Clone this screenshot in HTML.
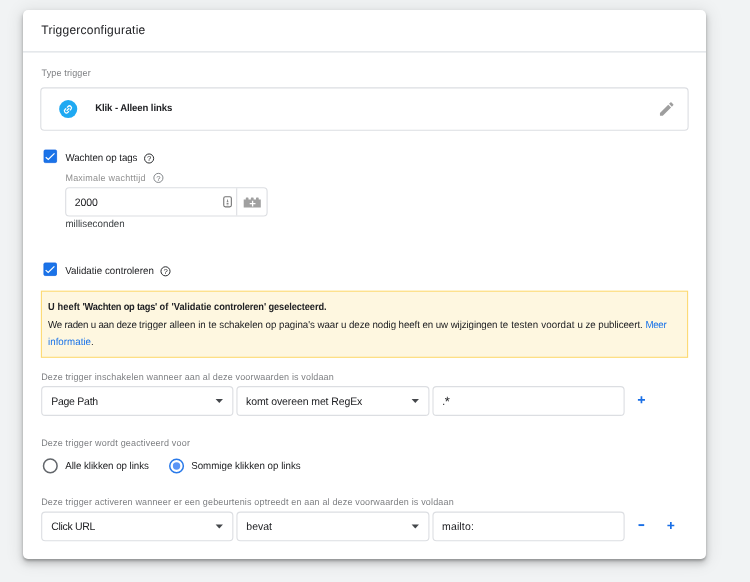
<!DOCTYPE html>
<html lang="nl">
<head>
<meta charset="utf-8">
<title>Triggerconfiguratie</title>
<style>
  html, body { margin: 0; padding: 0; }
  body {
    width: 750px; height: 582px; overflow: hidden; position: relative;
    background: #f1f3f4;
    font-family: "Liberation Sans", sans-serif;
    color: #202124;
  }
  .card {
    position: absolute; left: 23px; top: 10px; width: 683px; height: 549px;
    background: #fff; border-radius: 5px;
    box-shadow: 0 2px 2.5px rgba(0,0,0,.24), 0 4px 6px 1px rgba(0,0,0,.15), 0 2px 16px 4px rgba(0,0,0,.07);
  }
  #shapes { position: absolute; left: 0; top: 0; will-change: transform; }
  #text { position: absolute; left: 0; top: 0; width: 750px; height: 582px; will-change: transform; }
  .t { position: absolute; white-space: nowrap; line-height: 14px; margin: 0; text-rendering: geometricPrecision; transform: scaleY(1.033); transform-origin: 0 10.5px; }
  .title { left: 41.3px; top: 23px; font-size: 12px; letter-spacing: .24px; color: #202124; }
  .lbl { font-size: 9px; color: #7d7f82; letter-spacing: .15px; }
  .txt { font-size: 9.75px; color: #202124; }
  .fld { font-size: 10.5px; color: #202124; }
  .t.b { font-size: 9.25px; font-weight: 700; transform: scaleY(1.09); transform-origin: 0 9px; }
  a { color: #1a73e8; text-decoration: none; }
</style>
</head>
<body>
<div class="card"></div>

<svg id="shapes" width="750" height="582" viewBox="0 0 750 582">
  <!-- header divider -->
  <rect x="23" y="51.1" width="683" height="1.5" fill="#e3e6e9"/>

  <!-- trigger type box -->
  <rect x="40.8" y="87.9" width="647.3" height="42.3" rx="3.5" fill="#fff" stroke="#dcdee2" stroke-width="1.1"/>
  <circle cx="68.2" cy="109.05" r="9.05" fill="#1fa9f2"/>
  <g transform="translate(67.95 109.4) rotate(-45) scale(.84)" fill="none" stroke="#fff" stroke-width="1.45" stroke-linecap="butt">
    <path d="M-0.7 -2.35 H-2.6 A2.35 2.35 0 0 0 -2.6 2.35 H-0.7"/>
    <path d="M0.7 -2.35 H2.6 A2.35 2.35 0 0 1 2.6 2.35 H0.7"/>
    <path d="M-2.2 0 H2.2"/>
  </g>
  <!-- pencil -->
  <g transform="translate(657.7 100) scale(.75)">
    <path fill="#9e9e9e" d="M3 17.25V21h3.75L17.81 9.94l-3.75-3.75L3 17.25zM20.71 7.04c.39-.39.39-1.02 0-1.41l-2.34-2.34c-.39-.39-1.02-.39-1.41 0l-1.83 1.83 3.75 3.75 1.83-1.83z"/>
  </g>

  <!-- checkbox 1 -->
  <rect x="44" y="150" width="12.6" height="12.6" rx="1.3" fill="#1a73e8" stroke="#1466df" stroke-width=".8"/>
  <path d="M45.75 157.2 L48.3 159.5 L54.5 153.4" fill="none" stroke="#fff" stroke-width="1.25"/>
  <!-- help 1 -->
  <circle cx="149.1" cy="158.5" r="4.55" fill="none" stroke="#26282b" stroke-width="1"/>
  <!-- help 2 -->
  <circle cx="158.4" cy="177.9" r="4.55" fill="none" stroke="#75797e" stroke-width=".9"/>

  <!-- number input -->
  <rect x="65.7" y="187.7" width="201.4" height="28.3" rx="3.5" fill="#fff" stroke="#dcdee2" stroke-width="1.1"/>
  <rect x="236.15" y="188.2" width="1.1" height="27.3" fill="#dcdee2"/>
  <!-- small stepper-like icon -->
  <rect x="223.75" y="196.75" width="7.6" height="10.1" rx="1.6" fill="none" stroke="#747474" stroke-width="1.1"/>
  <path d="M227.55 198.7 L226.6 202.3 H228.5 Z M226.6 203.1 H228.5 V203.9 H226.6 Z M226.6 204.5 H228.5 V205.2 H226.6 Z" fill="#868686"/>
  <!-- lego brick with plus -->
  <g transform="translate(243.7 197.55)">
    <path fill="#a0a0a0" d="M0 1.9 H2.1 V.6 Q2.1 0 2.7 0 H4.2 Q4.8 0 4.8 .6 V1.9 H7.15 V.6 Q7.15 0 7.75 0 H9.35 Q9.95 0 9.95 .6 V1.9 H12.3 V.6 Q12.3 0 12.9 0 H14.4 Q15 0 15 .6 V1.9 H17.1 V9.85 H0 Z"/>
    <path fill="#fff" d="M8.25 3.2 H9.55 V5.45 H11.8 V6.75 H9.55 V9 H8.25 V6.75 H6 V5.45 H8.25 Z"/>
  </g>

  <!-- checkbox 2 -->
  <rect x="43.9" y="262.95" width="12.6" height="12.6" rx="1.3" fill="#1a73e8" stroke="#1466df" stroke-width=".8"/>
  <path d="M45.65 270.15 L48.2 272.45 L54.4 266.35" fill="none" stroke="#fff" stroke-width="1.25"/>
  <!-- help 3 -->
  <circle cx="165.5" cy="271.3" r="4.55" fill="none" stroke="#26282b" stroke-width="1"/>

  <!-- warning -->
  <rect x="41.4" y="291.2" width="646.2" height="66.1" fill="#fef7e0" stroke="#fdda72" stroke-width="1.1"/>

  <!-- row 1 -->
  <rect x="41.7" y="386.6" width="191.15" height="28.8" rx="3.5" fill="#fff" stroke="#dcdee2" stroke-width="1.1"/>
  <rect x="236.95" y="386.6" width="191.95" height="28.8" rx="3.5" fill="#fff" stroke="#dcdee2" stroke-width="1.1"/>
  <rect x="433" y="386.6" width="191.1" height="28.8" rx="3.5" fill="#fff" stroke="#dcdee2" stroke-width="1.1"/>
  <path d="M215.6 399 H222.95 L219.3 403 Z" fill="#44474b"/>
  <path d="M411.6 399 H418.95 L415.3 403 Z" fill="#44474b"/>
  <path d="M637.9 399.8 H645 M641.45 396.3 V403.3" stroke="#1a6fe6" stroke-width="1.7" fill="none"/>

  <!-- radios -->
  <circle cx="50.3" cy="465.9" r="6.8" fill="#fff" stroke="#62666b" stroke-width="1.5"/>
  <circle cx="176.55" cy="466" r="6.8" fill="#fff" stroke="#2a7ae9" stroke-width="1.5"/>
  <circle cx="176.55" cy="466" r="3.7" fill="#5b95f5"/>

  <!-- row 2 -->
  <rect x="41.7" y="512.1" width="191.15" height="28.7" rx="3.5" fill="#fff" stroke="#dcdee2" stroke-width="1.1"/>
  <rect x="236.95" y="512.1" width="191.95" height="28.7" rx="3.5" fill="#fff" stroke="#dcdee2" stroke-width="1.1"/>
  <rect x="433" y="512.1" width="191.1" height="28.7" rx="3.5" fill="#fff" stroke="#dcdee2" stroke-width="1.1"/>
  <path d="M215.6 524.5 H222.95 L219.3 528.5 Z" fill="#44474b"/>
  <path d="M411.6 524.5 H418.95 L415.3 528.5 Z" fill="#44474b"/>
  <path d="M638.5 525.1 H644.2" stroke="#1a6fe6" stroke-width="1.9" fill="none"/>
  <path d="M667.4 525.5 H674.3 M670.85 522 V529" stroke="#1a6fe6" stroke-width="1.7" fill="none"/>

  <!-- question marks in help icons -->
  <g font-family="Liberation Sans, sans-serif" text-anchor="middle">
    <text x="149.15" y="161.3" font-size="7.8" fill="#17181a">?</text>
    <text x="158.45" y="180.7" font-size="7.8" fill="#6c6f73">?</text>
    <text x="165.55" y="274.1" font-size="7.8" fill="#17181a">?</text>
  </g>
</svg>

<div id="text">
<div class="t title">Triggerconfiguratie</div>
<div class="t lbl" style="left:41.5px; top:66px;">Type trigger</div>
<div class="t" style="left:95.2px; top:102px; font-size:9.6px; font-weight:700; letter-spacing:-.11px; color:#202124;">Klik - Alleen links</div>

<div class="t txt" style="left:65.4px; top:152px; letter-spacing:-.05px;">Wachten op tags</div>
<div class="t lbl" style="left:65.4px; top:171px; color:#8f8f8f; letter-spacing:.24px;">Maximale wachttijd</div>
<div class="t fld" style="left:74.8px; top:196px; letter-spacing:-.09px;">2000</div>
<div class="t txt" style="left:65.4px; top:218px; color:#3c4043; letter-spacing:.02px;">milliseconden</div>

<div class="t txt" style="left:65.3px; top:265px; letter-spacing:.02px;">Validatie controleren</div>

<div class="t txt b" style="left:48.0px; top:300px; letter-spacing:0.09px;">U heeft</div>
<div class="t txt b" style="left:82.6px; top:300px; letter-spacing:-0.21px;">'Wachten op tags'</div>
<div class="t txt b" style="left:159.4px; top:300px; letter-spacing:0.26px;">of</div>
<div class="t txt b" style="left:171.5px; top:300px; letter-spacing:0.03px;">'Validatie</div>
<div class="t txt b" style="left:214.1px; top:300px; letter-spacing:-0.10px;">controleren'</div>
<div class="t txt b" style="left:268.5px; top:300px; letter-spacing:-0.09px;">geselecteerd.</div>
<div class="t txt" style="left:48.0px; top:319px; letter-spacing:-0.23px;">We raden u aan deze</div>
<div class="t txt" style="left:139.1px; top:319px; letter-spacing:0;">trigger alleen in te</div>
<div class="t txt" style="left:219.3px; top:319px; letter-spacing:-0.03px;">schakelen op pagina's</div>
<div class="t txt" style="left:317.5px; top:319px; letter-spacing:-0.07px;">waar u deze nodig</div>
<div class="t txt" style="left:398.6px; top:319px; letter-spacing:-0.09px;">heeft en uw wijzigingen</div>
<div class="t txt" style="left:500.0px; top:319px; letter-spacing:0.11px;">te testen voordat</div>
<div class="t txt" style="left:577.4px; top:319px; letter-spacing:-0.05px;">u ze publiceert.</div>
<div class="t txt" style="left:645.4px; top:319px; letter-spacing:-0.30px;"><a>Meer</a></div>
<div class="t txt" style="left:48px; top:336px; letter-spacing:.02px;"><a>informatie</a>.</div>

<div class="t lbl" style="left:41.2px; top:370px;">Deze trigger inschakelen wanneer aan al deze voorwaarden is voldaan</div>
<div class="t fld" style="left:51.2px; top:395px; letter-spacing:-.26px;">Page Path</div>
<div class="t fld" style="left:246px; top:395px; letter-spacing:-.1px;">komt overeen met RegEx</div>
<div class="t fld" style="left:442.2px; top:395px;">.<span style="position:relative; top:1px; left:-.4px; font-size:13px; line-height:0;">*</span></div>

<div class="t lbl" style="left:41.2px; top:436px; letter-spacing:.18px;">Deze trigger wordt geactiveerd voor</div>
<div class="t txt" style="left:65.2px; top:460px; letter-spacing:-.04px;">Alle klikken op links</div>
<div class="t txt" style="left:191.2px; top:460px;">Sommige klikken op links</div>

<div class="t lbl" style="left:41.2px; top:495px; letter-spacing:.16px;">Deze trigger activeren wanneer er een gebeurtenis optreedt en aan al deze voorwaarden is voldaan</div>
<div class="t fld" style="left:51.2px; top:520px; letter-spacing:-.3px;">Click URL</div>
<div class="t fld" style="left:246.3px; top:520px;">bevat</div>
<div class="t fld" style="left:442px; top:520px; letter-spacing:.15px;">mailto:</div>
</div>
</body>
</html>
